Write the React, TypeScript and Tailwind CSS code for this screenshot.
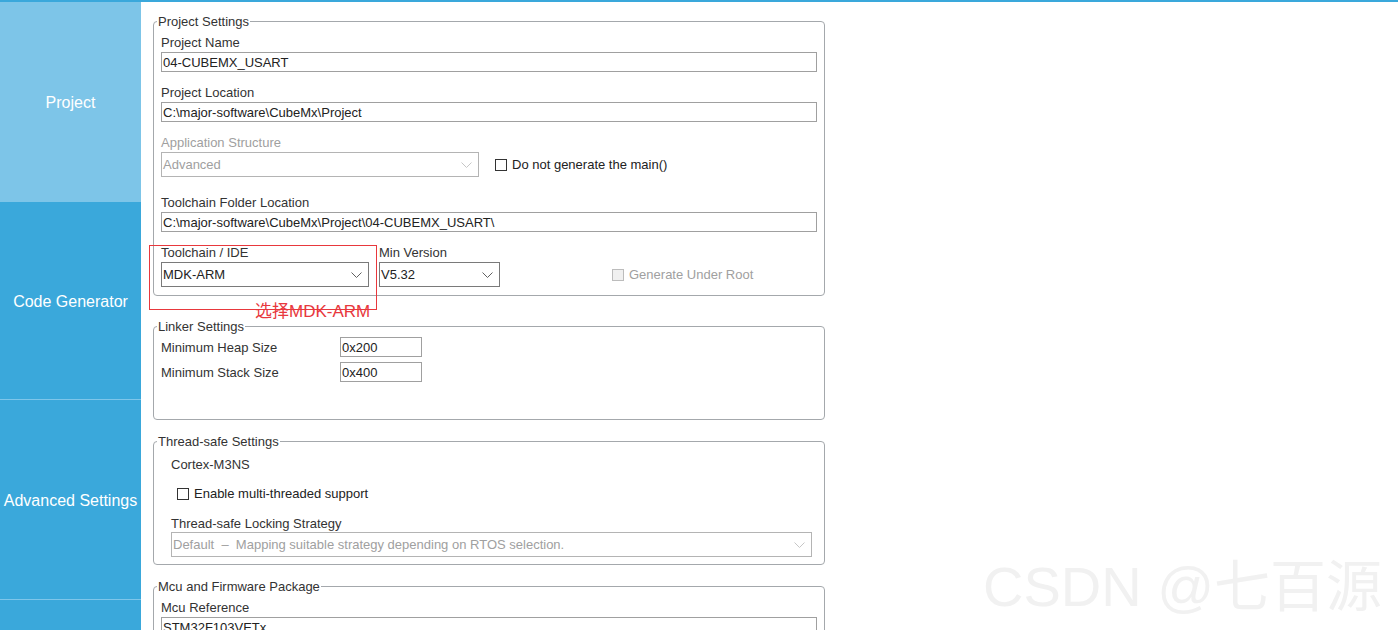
import type { ReactNode } from "react";

function Chevron({ disabled }: { disabled?: boolean }) {
  return (
    <svg
      width="11"
      height="6"
      viewBox="0 0 11 6"
      className={disabled ? "text-[#c6c6c6]" : "text-[#606060]"}
    >
      <polyline
        points="0.5,0.5 5.5,5.5 10.5,0.5"
        fill="none"
        stroke="currentColor"
        strokeWidth="1"
      />
    </svg>
  );
}

function Fieldset({
  title,
  className = "",
  children,
}: {
  title: string;
  className?: string;
  children: ReactNode;
}) {
  return (
    <fieldset
      className={`w-[672px] border border-[#a4a8ac] rounded-[4px] ${className}`}
    >
      <legend className="ml-[3px] px-[1px] h-[16px] pt-[1px] text-[13px] leading-[16px] text-[#333]">
        {title}
      </legend>
      {children}
    </fieldset>
  );
}

function Label({
  children,
  disabled,
  className = "",
}: {
  children: ReactNode;
  disabled?: boolean;
  className?: string;
}) {
  return (
    <div
      className={`h-[16px] pt-[1px] text-[13px] leading-[16px] ${
        disabled ? "text-[#a0a0a0]" : "text-[#333]"
      } ${className}`}
    >
      {children}
    </div>
  );
}

function TextInput({ value, className = "" }: { value: string; className?: string }) {
  return (
    <div
      className={`h-[20px] border border-[#a0a0a0] bg-white pl-[1px] pt-[2px] flex items-center text-[13px] text-[#222] whitespace-nowrap overflow-hidden ${className}`}
    >
      {value}
    </div>
  );
}

function Select({
  value,
  disabled,
  className = "",
}: {
  value: ReactNode;
  disabled?: boolean;
  className?: string;
}) {
  return (
    <div
      className={`h-[25px] border bg-white pl-[1px] pr-[6px] flex items-center justify-between text-[13px] whitespace-nowrap ${
        disabled ? "border-[#b4b4b4] text-[#a0a0a0]" : "border-[#7a7a7a] text-[#222]"
      } ${className}`}
    >
      <span>{value}</span>
      <Chevron disabled={disabled} />
    </div>
  );
}

function Checkbox({ label, disabled }: { label: string; disabled?: boolean }) {
  return (
    <div className="flex items-center gap-[5px] text-[13px] leading-[16px]">
      <span
        className={`w-[12px] h-[12px] border ${
          disabled ? "border-[#bcbcbc] bg-[#f0f0f0]" : "border-[#333] bg-white"
        }`}
      />
      <span className={disabled ? "text-[#a0a0a0]" : "text-[#222]"}>{label}</span>
    </div>
  );
}

const tabs = [
  { name: "Project", active: true },
  { name: "Code Generator" },
  { name: "Advanced Settings" },
  { name: "" },
];

export default function App() {
  return (
    <div className="relative h-[630px] w-[1398px] overflow-hidden bg-white font-['Liberation_Sans','Noto_Sans_CJK_SC',sans-serif] flex flex-col">
      {/* top accent line */}
      <div className="h-[2px] bg-[#3aa8db] shrink-0" />

      <div className="flex flex-1 min-h-0">
        {/* Sidebar */}
        <div className="w-[141px] shrink-0 flex flex-col bg-[#3aa8db]">
          {tabs.map((tab, i) => (
            <div
              key={i}
              className={`flex items-center justify-center pt-[2px] text-[16px] text-white shrink-0 ${
                tab.active
                  ? "h-[200px] bg-[#7dc5e8]"
                  : i === 1
                  ? "h-[198px] border-b border-[#7ec6ea]"
                  : i === 2
                  ? "h-[200px] border-b border-[#7ec6ea]"
                  : "h-[200px]"
              }`}
            >
              {tab.name}
            </div>
          ))}
        </div>

        {/* Content */}
        <div className="flex-1 pl-[12px] pt-[11px]">
          <Fieldset title="Project Settings">
            <div className="px-[7px] pb-[8px]">
              <Label className="mt-[5px]">Project Name</Label>
              <TextInput value="04-CUBEMX_USART" className="mt-[2px]" />

              <Label className="mt-[12px]">Project Location</Label>
              <TextInput value="C:\major-software\CubeMx\Project" className="mt-[2px]" />

              <Label disabled className="mt-[12px]">
                Application Structure
              </Label>
              <div className="mt-[2px] flex items-center">
                <Select value="Advanced" disabled className="w-[318px]" />
                <div className="ml-[16px]">
                  <Checkbox label="Do not generate the main()" />
                </div>
              </div>

              <Label className="mt-[17px]">Toolchain Folder Location</Label>
              <TextInput
                value="C:\major-software\CubeMx\Project\04-CUBEMX_USART\"
                className="mt-[2px]"
              />

              <div className="mt-[12px] flex items-end">
                <div className="w-[208px]">
                  <Label>Toolchain / IDE</Label>
                  <Select value="MDK-ARM" className="mt-[2px] w-[208px]" />
                </div>
                <div className="ml-[10px] w-[121px]">
                  <Label>Min Version</Label>
                  <Select value="V5.32" className="mt-[2px] w-[121px]" />
                </div>
                <div className="ml-[112px] h-[25px] flex items-center">
                  <Checkbox label="Generate Under Root" disabled />
                </div>
              </div>
            </div>
          </Fieldset>

          <Fieldset title="Linker Settings" className="mt-[22px]">
            <div className="px-[7px] pt-[3px] pb-[37px]">
              <div className="flex items-center">
                <Label className="w-[179px]">Minimum Heap Size</Label>
                <TextInput value="0x200" className="w-[82px]" />
              </div>
              <div className="mt-[5px] flex items-center">
                <Label className="w-[179px]">Minimum Stack Size</Label>
                <TextInput value="0x400" className="w-[82px]" />
              </div>
            </div>
          </Fieldset>

          <Fieldset title="Thread-safe Settings" className="mt-[13px]">
            <div className="pl-[17px] pr-[12px] pb-[7px]">
              <Label className="mt-[7px]">Cortex-M3NS</Label>
              <div className="mt-[14px] ml-[6px]">
                <Checkbox label="Enable multi-threaded support" />
              </div>
              <Label className="mt-[13px]">Thread-safe Locking Strategy</Label>
              <Select
                disabled
                className="mt-[1px]"
                value={
                  <>
                    Default&nbsp;&nbsp;&ndash;&nbsp;&nbsp;Mapping suitable strategy depending on RTOS
                    selection.
                  </>
                }
              />
            </div>
          </Fieldset>

          <Fieldset title="Mcu and Firmware Package" className="mt-[13px]">
            <div className="px-[7px] pb-[8px]">
              <Label className="mt-[5px]">Mcu Reference</Label>
              <TextInput value="STM32F103VETx" className="mt-[2px]" />
            </div>
          </Fieldset>
        </div>
      </div>

      {/* annotation overlay */}
      <div className="absolute left-[149px] top-[245px] w-[228px] h-[65px] border border-[#e8383d]" />
      <div className="absolute left-[255px] top-[302px] text-[17px] leading-[20px] text-[#e8383d] whitespace-nowrap">
        选择MDK-ARM
      </div>

      {/* watermark */}
      <div className="absolute left-[983px] top-[556px] text-[56px] leading-[62px] text-[#f1f1f1] whitespace-nowrap select-none">
        CSDN @七百源
      </div>
    </div>
  );
}
